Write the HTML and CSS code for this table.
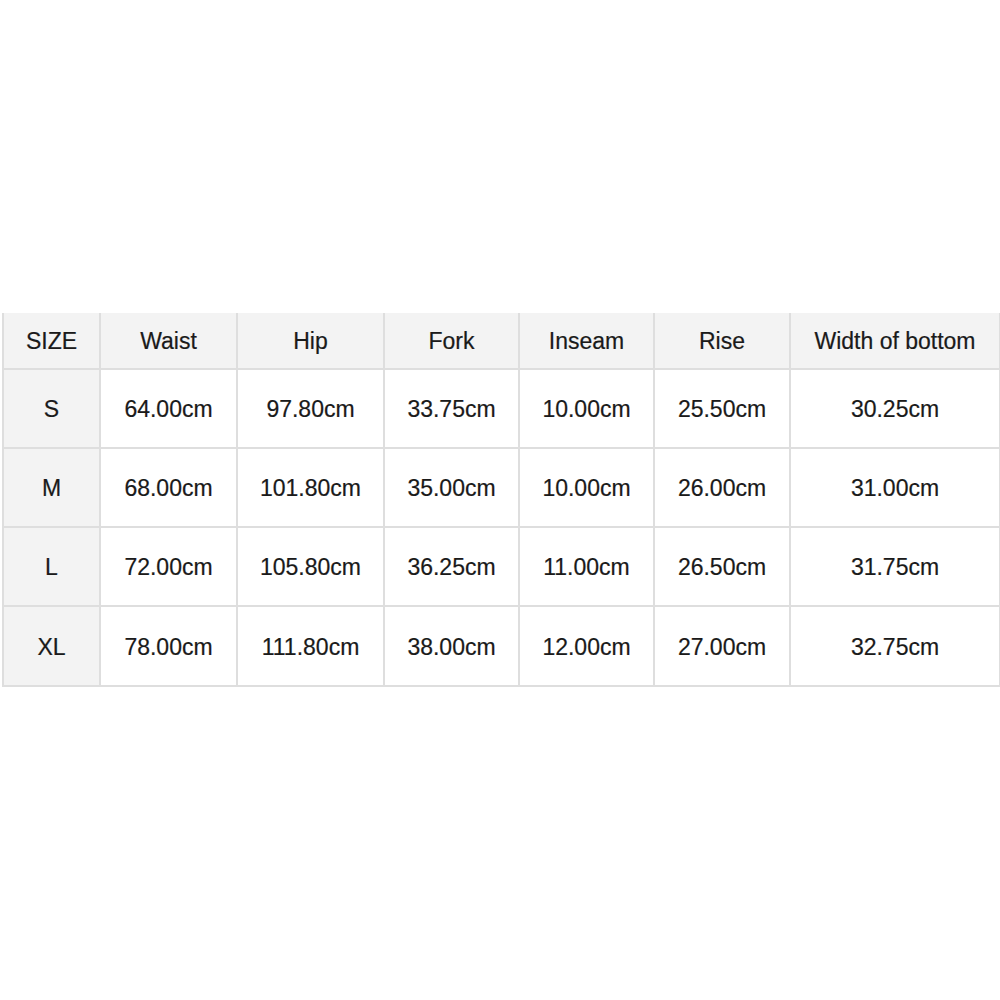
FILE: index.html
```html
<!DOCTYPE html>
<html>
<head>
<meta charset="utf-8">
<link rel="stylesheet" href="styles.css">
</head>
<body>
<div class="page">
<table class="sizes">
<colgroup>
<col class="c1"><col class="c2"><col class="c3"><col class="c4"><col class="c5"><col class="c6"><col class="c7">
</colgroup>
<thead>
<tr><th>SIZE</th><th>Waist</th><th>Hip</th><th>Fork</th><th>Inseam</th><th>Rise</th><th>Width of bottom</th></tr>
</thead>
<tbody>
<tr><th>S</th><td>64.00cm</td><td>97.80cm</td><td>33.75cm</td><td>10.00cm</td><td>25.50cm</td><td>30.25cm</td></tr>
<tr><th>M</th><td>68.00cm</td><td>101.80cm</td><td>35.00cm</td><td>10.00cm</td><td>26.00cm</td><td>31.00cm</td></tr>
<tr><th>L</th><td>72.00cm</td><td>105.80cm</td><td>36.25cm</td><td>11.00cm</td><td>26.50cm</td><td>31.75cm</td></tr>
<tr class="last"><th>XL</th><td>78.00cm</td><td>111.80cm</td><td>38.00cm</td><td>12.00cm</td><td>27.00cm</td><td>32.75cm</td></tr>
</tbody>
</table>
</div>
</body>
</html>
```
FILE: styles.css
```css
html, body {
  margin: 0;
  padding: 0;
  background: #ffffff;
}
.page {
  padding: 313px 2px 0 2px;
}
.sizes {
  border-collapse: collapse;
  table-layout: fixed;
  width: 997px;
  font-family: "Liberation Sans", Arial, sans-serif;
  font-size: 23px;
  line-height: 1;
  color: #1a1a1a;
}
.c1 { width: 97px; }
.c2 { width: 137px; }
.c3 { width: 147px; }
.c4 { width: 135px; }
.c5 { width: 135px; }
.c6 { width: 136px; }
.c7 { width: 210px; }
.sizes th,
.sizes td {
  border: 2px solid #dedede;
  text-align: center;
  font-weight: normal;
  padding: 2px 0 0 0;
  height: 75px;
  -webkit-text-stroke: 0.2px #1a1a1a;
}
.sizes thead tr th {
  border-top: none;
  background: #f3f3f3;
  padding-top: 1px;
  height: 54px;
}
.sizes tbody th {
  background: #f3f3f3;
}
.sizes td {
  background: #ffffff;
}
.sizes tr.last th,
.sizes tr.last td {
  height: 76px;
}
```
